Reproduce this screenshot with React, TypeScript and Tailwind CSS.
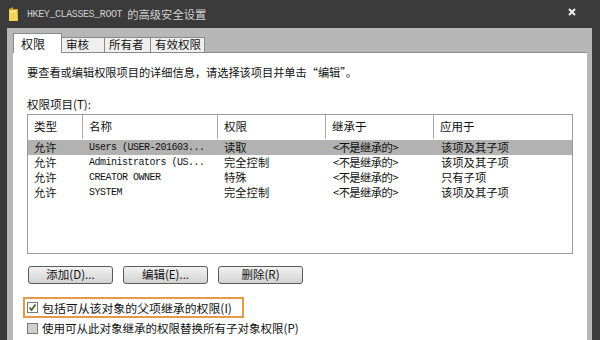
// advanced security settings dialog
// registry key permissions window with tabs, list and checkboxes

const cjk = "font-['Noto_Sans_CJK_SC',sans-serif]";
const mono = "font-['Liberation_Mono','Noto_Sans_CJK_SC',monospace]";

const rows = [
  { type: "允许", name: "Users (USER-201603...", perm: "读取", from: "<不是继承的>", to: "该项及其子项" },
  { type: "允许", name: "Administrators (US...", perm: "完全控制", from: "<不是继承的>", to: "该项及其子项" },
  { type: "允许", name: "CREATOR OWNER", perm: "特殊", from: "<不是继承的>", to: "只有子项" },
  { type: "允许", name: "SYSTEM", perm: "完全控制", from: "<不是继承的>", to: "该项及其子项" },
];

const tabs = ["审核", "所有者", "有效权限"];
const tabWidths = ["w-[43px]", "w-[46px]", "w-[54px]"];

const FolderIcon = () => (
  <svg width="11" height="16" viewBox="0 0 11 16">
    <path d="M1 3 L5 1 L5 3 L10 3 L10 15 L1 15 Z" fill="#c9a227" />
    <path d="M1 4 L9 4 L10 15 L1 15 Z" fill="#f2d45c" />
    <path d="M2 5 L8 5 L8 6 L2 6 Z" fill="#fff3b0" />
  </svg>
);

const Checkbox = ({ checked }: { checked: boolean }) => (
  <div
    className={`w-[11px] h-[11px] border border-[#7a7a7a] flex items-center justify-center ${
      checked ? "bg-white" : "bg-[#cfcfcf]"
    }`}
  >
    {checked && (
      <svg width="9" height="9" viewBox="0 0 9 9">
        <path d="M1.5 4.5 L3.5 7 L7.5 1.5" stroke="#4a6a1f" strokeWidth="1.8" fill="none" />
      </svg>
    )}
  </div>
);

const Button = ({ label }: { label: string }) => (
  <div
    className={`w-[85px] h-[18px] rounded-[3px] border border-[#5a5a5a] bg-gradient-to-b from-[#f2f2f2] to-[#d2d2d2] flex items-center justify-center text-[11.5px] leading-none text-[#111] ${cjk}`}
  >
    {label}
  </div>
);

export default function App() {
  return (
    <div className="w-[600px] h-[340px] overflow-hidden bg-[#3b3b3b] flex flex-col">
      {/* title bar */}
      <div className="h-[28px] shrink-0 flex items-center pl-[8px] pr-[24px]">
        <FolderIcon />
        <span className={`ml-[8px] text-[10px] tracking-[-0.4px] text-[#d0d0d0] ${mono}`}>
          HKEY_CLASSES_ROOT
        </span>
        <span className={`ml-[5px] text-[11.3px] text-[#d0d0d0] ${cjk}`}>的高级安全设置</span>
        <div className="flex-1" />
        <svg width="8" height="8" viewBox="0 0 8 8" className="mb-[4px]">
          <path d="M1 1 L7 7 M7 1 L1 7" stroke="#f0f0f0" strokeWidth="2" />
        </svg>
      </div>

      {/* window frame */}
      <div className="flex-1 flex pl-[7px] pr-[8px]">
        <div className="flex-1 bg-[#b7b7b7] pl-[6px] pr-[5px] flex flex-col">
          {/* tabs */}
          <div className="h-[24px] shrink-0 flex items-end">
            <div
              className={`w-[49px] h-[20px] bg-white border border-b-0 border-[#8a8a8a] flex items-center pl-[7px] text-[12px] text-[#111] relative z-10 -mb-px ${cjk}`}
            >
              权限
            </div>
            {tabs.map((t, i) => (
              <div
                key={t}
                className={`${tabWidths[i]} h-[15px] bg-[#efefef] border border-b-0 border-l-0 border-[#8a8a8a] flex items-center pl-[4px] text-[11.5px] text-[#111] ${cjk}`}
              >
                {t}
              </div>
            ))}
          </div>

          {/* tab panel */}
          <div className={`flex-1 bg-white border-t border-[#8a8a8a] pl-[14px] pt-[11px] text-[#111] ${cjk}`}>
            <p className="text-[11.2px] leading-[16px]">
              要查看或编辑权限项目的详细信息，请选择该项目并单击“编辑”。
            </p>
            <p className="mt-[16px] text-[11.5px] leading-[16px]">权限项目(T):</p>

            {/* permission list */}
            <div className="mt-[2px] w-[546px] h-[140px] border border-[#9a9a9a] bg-white">
              <div className="grid grid-cols-[55px_135px_108px_108px_137px] h-[24px] text-[11.5px]">
                {["类型", "名称", "权限", "继承于", "应用于"].map((h, i) => (
                  <div
                    key={h}
                    className={`flex items-center pl-[6px] ${i < 4 ? "border-r border-[#a8a8a8]" : ""}`}
                  >
                    {h}
                  </div>
                ))}
              </div>
              <div className="mt-px">
                {rows.map((r, i) => (
                  <div
                    key={r.name}
                    className={`grid grid-cols-[55px_135px_108px_108px_137px] h-[15px] items-center text-[11.3px] leading-none ${
                      i === 0 ? "bg-[#b2b2b2]" : ""
                    }`}
                  >
                    <span className="pl-[6px]">{r.type}</span>
                    <span className={`pl-[6px] text-[10px] tracking-[-0.5px] ${mono}`}>{r.name}</span>
                    <span className="pl-[6px]">{r.perm}</span>
                    <span className="pl-[7px] tracking-[-0.6px]">{r.from}</span>
                    <span className="pl-[7px]">{r.to}</span>
                  </div>
                ))}
              </div>
            </div>

            {/* action buttons */}
            <div className="mt-[12px] ml-[1px] flex gap-[10px]">
              <Button label="添加(D)..." />
              <Button label="编辑(E)..." />
              <Button label="删除(R)" />
            </div>

            {/* inheritance options */}
            <div className="mt-[13px] -ml-[4px] w-[221px] h-[21px] border-2 border-[#e59a4a] flex items-center pl-[2px] gap-[4px]">
              <Checkbox checked />
              <span className="text-[11.9px] leading-none">包括可从该对象的父项继承的权限(I)</span>
            </div>
            <div className="mt-[5px] flex items-center gap-[4px]">
              <Checkbox checked={false} />
              <span className="text-[11.5px] leading-none">使用可从此对象继承的权限替换所有子对象权限(P)</span>
            </div>
          </div>
        </div>
      </div>
    </div>
  );
}
